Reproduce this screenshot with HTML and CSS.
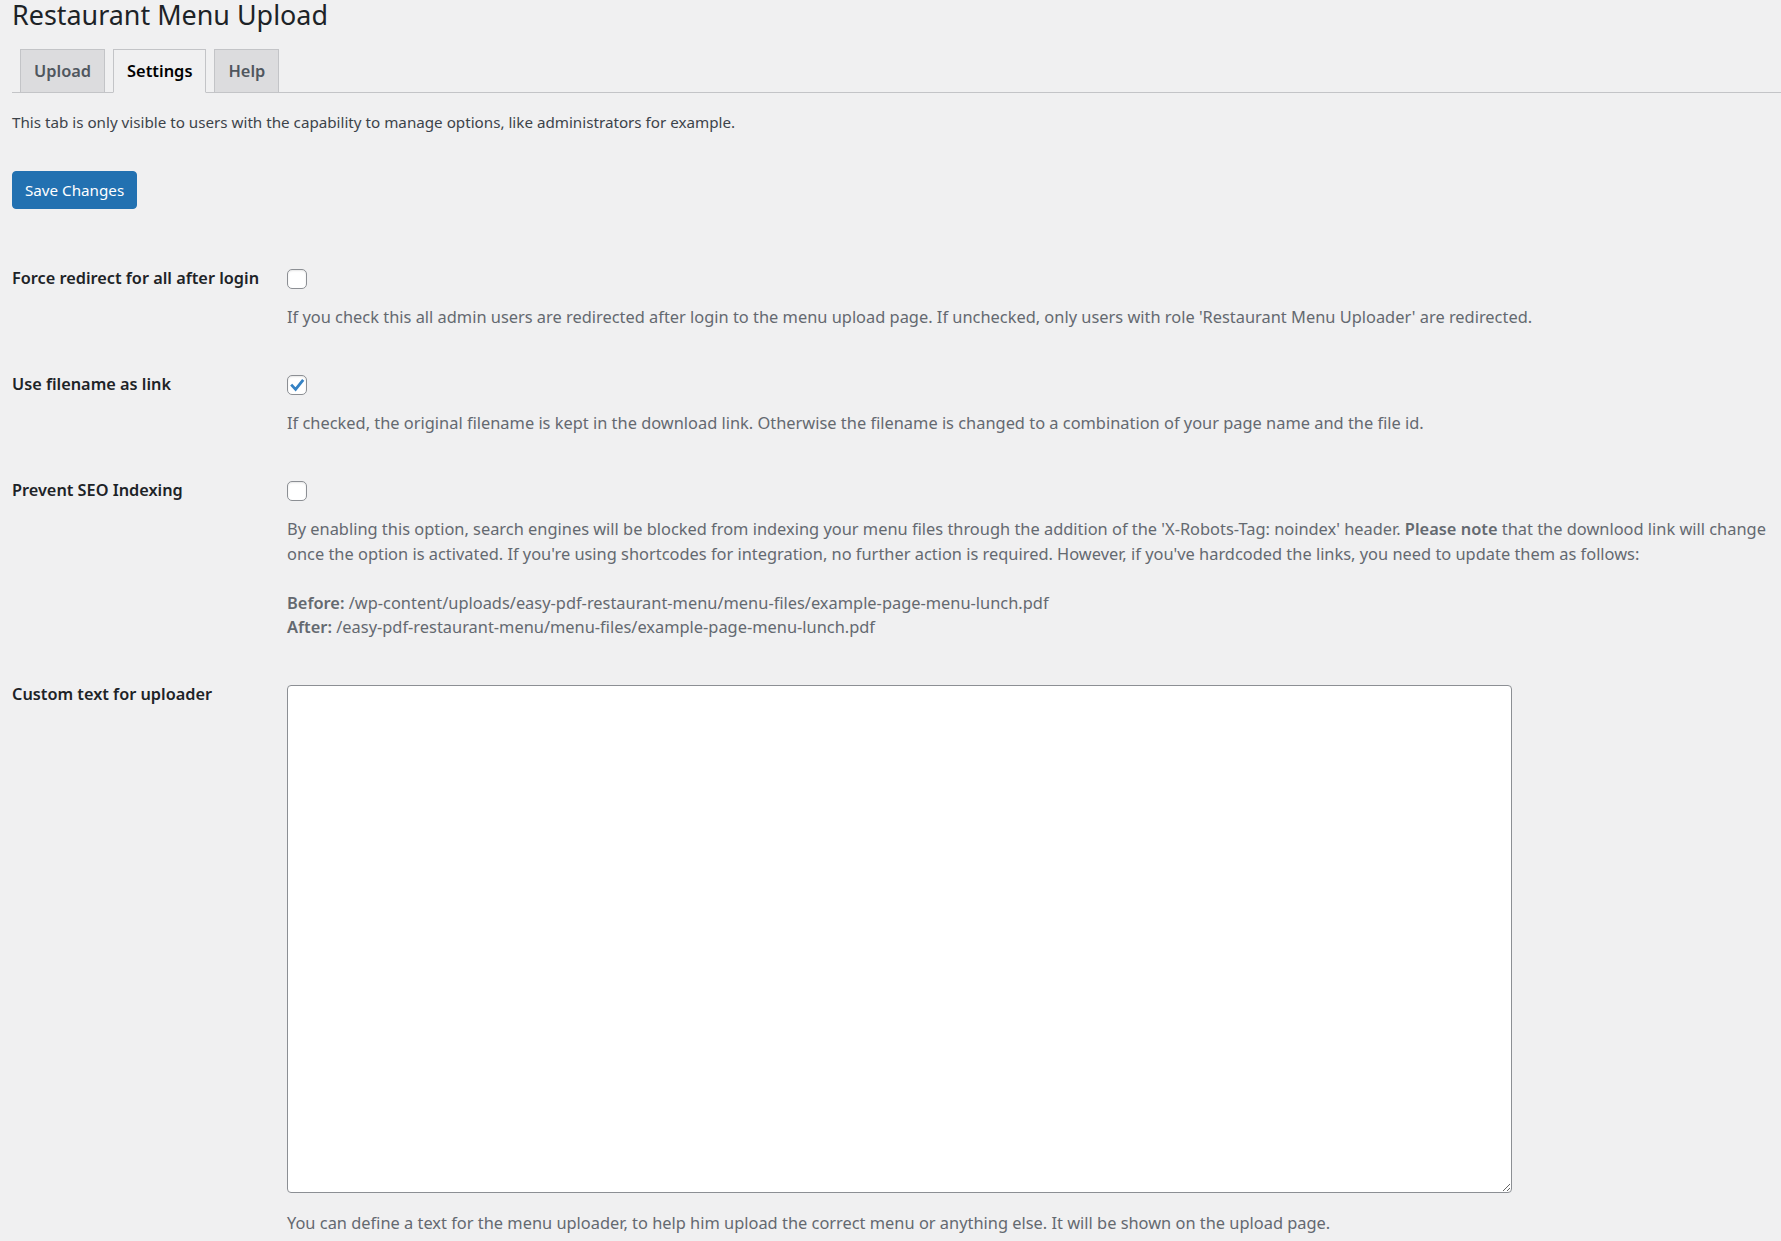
FILE: index.html
```html
<!DOCTYPE html>
<html lang="en">
<head>
    <meta charset="UTF-8">
    <meta name="viewport" content="width=device-width, initial-scale=1.0">
    <title>Restaurant Menu Upload</title>
    <link rel="stylesheet" href="styles.css">
</head>
<body>
    <div class="wrap">
        <h1>Restaurant Menu Upload</h1>

        <nav class="nav-tabs">
            <a class="nav-tab" href="#upload">Upload</a>
            <a class="nav-tab nav-tab-active" href="#settings">Settings</a>
            <a class="nav-tab" href="#help">Help</a>
        </nav>

        <p class="intro">This tab is only visible to users with the capability to manage options, like administrators for example.</p>

        <button class="button-primary" type="submit">Save Changes</button>

        <div class="form-table">
            <div class="form-row">
                <div class="form-label">Force redirect for all after login</div>
                <div class="form-field">
                    <label class="check">
                        <input type="checkbox" name="force_redirect">
                    </label>
                    <p class="description">If you check this all admin users are redirected after login to the menu upload page. If unchecked, only users with role 'Restaurant Menu Uploader' are redirected.</p>
                </div>
            </div>

            <div class="form-row">
                <div class="form-label">Use filename as link</div>
                <div class="form-field">
                    <label class="check">
                        <input type="checkbox" name="filename_link" checked>
                        <svg class="tick" viewBox="0 0 20 20" aria-hidden="true"><polyline points="4.2,9.6 8.6,14.4 16.2,4.8"/></svg>
                    </label>
                    <p class="description">If checked, the original filename is kept in the download link. Otherwise the filename is changed to a combination of your page name and the file id.</p>
                </div>
            </div>

            <div class="form-row">
                <div class="form-label">Prevent SEO Indexing</div>
                <div class="form-field">
                    <label class="check">
                        <input type="checkbox" name="prevent_seo">
                    </label>
                    <p class="description">By enabling this option, search engines will be blocked from indexing your menu files through the addition of the 'X-Robots-Tag: noindex' header. <strong>Please note</strong> that the downlood link will change<br>once the option is activated. If you're using shortcodes for integration, no further action is required. However, if you've hardcoded the links, you need to update them as follows:<br><br><strong>Before:</strong> /wp-content/uploads/easy-pdf-restaurant-menu/menu-files/example-page-menu-lunch.pdf<br><strong>After:</strong> /easy-pdf-restaurant-menu/menu-files/example-page-menu-lunch.pdf</p>
                </div>
            </div>

            <div class="form-row">
                <div class="form-label">Custom text for uploader</div>
                <div class="form-field">
                    <textarea class="uploader-text" name="uploader_text"></textarea>
                    <p class="description">You can define a text for the menu uploader, to help him upload the correct menu or anything else. It will be shown on the upload page.</p>
                </div>
            </div>
        </div>
    </div>
</body>
</html>
```

FILE: styles.css
```css
body {
    margin: 0;
    background-color: #f0f0f1;
    color: #3c434a;
    font-family: "Noto Sans", "Open Sans", sans-serif;
    font-size: 15.2px;
}

.wrap {
    padding-left: 12px;
}

h1 {
    margin: 0;
    font-size: 26.9px;
    font-weight: 400;
    line-height: 30px;
    color: #1d2327;
}

.nav-tabs {
    display: flex;
    gap: 8px;
    margin-top: 19px;
    padding-left: 8px;
    border-bottom: 1px solid #c3c4c7;
}

.nav-tab {
    margin-bottom: -1px;
    padding: 6px 13px;
    border: 1px solid #c3c4c7;
    background-color: #dcdcde;
    color: #50575e;
    font-size: 16.4px;
    font-weight: 600;
    line-height: 30px;
    text-decoration: none;
}

.nav-tab-active {
    background-color: #f0f0f1;
    border-bottom-color: #f0f0f1;
    color: #000;
}

.intro {
    margin: 17px 0 0;
    line-height: 24.4px;
}

.button-primary {
    display: block;
    margin-top: 37px;
    height: 38px;
    padding: 0 12px;
    border: 1px solid #2271b1;
    border-radius: 4px;
    background-color: #2271b1;
    color: #fff;
    font-family: inherit;
    font-size: 15.2px;
    cursor: pointer;
}

.form-table {
    margin-top: 33px;
}

.form-row {
    display: grid;
    grid-template-columns: 275px 1fr;
}

.form-label {
    padding-top: 25px;
    color: #1d2327;
    font-size: 16.3px;
    font-weight: 600;
    line-height: 22.75px;
}

.form-field {
    padding: 27px 0 18.5px;
}

.check {
    position: relative;
    display: block;
    width: 20px;
    height: 20px;
}

.check input {
    appearance: none;
    display: block;
    margin: 0;
    width: 20px;
    height: 20px;
    border: 1px solid #8c8f94;
    border-radius: 5px;
    background-color: #fff;
    box-shadow: inset 0 1px 2px rgba(0,0,0,0.1);
}

.tick {
    position: absolute;
    left: 0;
    top: 0;
    width: 20px;
    height: 20px;
    fill: none;
    stroke: #3582c4;
    stroke-width: 2.8;
    stroke-linejoin: miter;
}

.description {
    margin: 16px 0 0;
    color: #646970;
    font-size: 16.4px;
    line-height: 24.5px;
}

.description strong {
    font-weight: 600;
}

.uploader-text {
    display: block;
    box-sizing: border-box;
    width: 1225px;
    height: 508px;
    margin: 0;
    border: 1px solid #8c8f94;
    border-radius: 4px;
    background-color: #fff;
}

.uploader-text + .description {
    margin-top: 18px;
}
```
